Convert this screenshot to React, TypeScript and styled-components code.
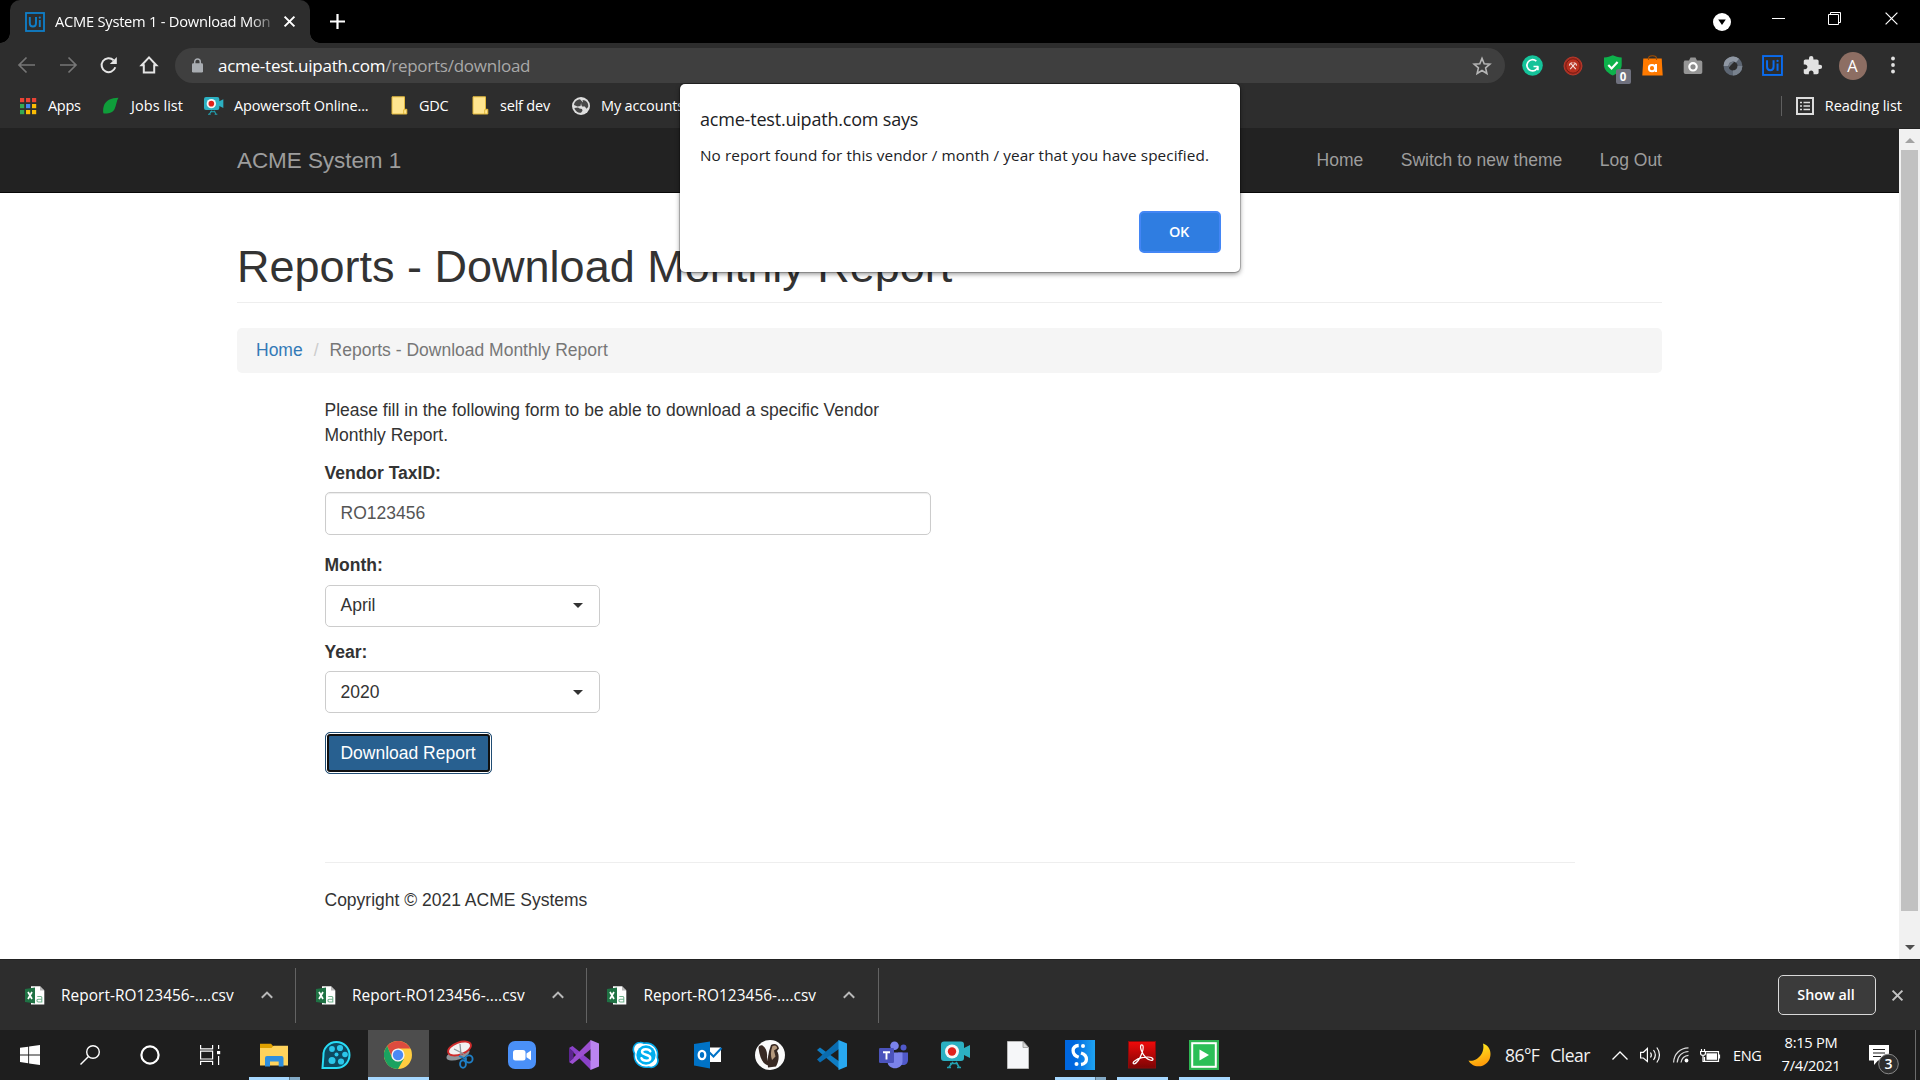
import React from "react";
import styled, { createGlobalStyle, css } from "styled-components";

const ui = `"Open Sans", "Noto Sans", sans-serif`;
const page = `"Liberation Sans", Arial, sans-serif`;

const Global = createGlobalStyle`
  *, *::before, *::after { box-sizing: border-box; }
  html, body { margin: 0; padding: 0; background: #fff; overflow: hidden; }
  button, input { font: inherit; margin: 0; }
  svg { display: block; flex: none; overflow: visible; }
`;

const Screen = styled.div`
  position: relative;
  width: 1920px;
  height: 1080px;
  display: flex;
  flex-direction: column;
  overflow: hidden;
  font-family: ${ui};
`;

/* ---------- tab strip ---------- */
const TabStrip = styled.header`
  height: 43px;
  flex: none;
  background: #000;
  display: flex;
  align-items: flex-start;
  padding-left: 10px;
`;
const Tab = styled.div`
  position: relative;
  width: 300px;
  height: 43px;
  background: #2d2d2d;
  border-radius: 10px 10px 0 0;
  display: flex;
  align-items: center;
  padding-left: 15px;
  &::before, &::after {
    content: "";
    position: absolute;
    bottom: 0;
    width: 10px;
    height: 10px;
  }
  &::before { left: -10px; background: radial-gradient(circle at 0 0, #000 9.5px, #2d2d2d 10px); }
  &::after { right: -10px; background: radial-gradient(circle at 100% 0, #000 9.5px, #2d2d2d 10px); }
`;
const TabTitle = styled.span`
  width: 221px;
  margin: 0 8px 2px 10px;
  white-space: nowrap;
  color: #fff;
  font-size: 14.7px;
  letter-spacing: -0.25px;
  line-height: 22px;
  mask-image: linear-gradient(to right, #000 88%, transparent 101%);
`;
const NewTab = styled.div`
  padding: 14px 0 0 20px;
`;
const WindowControls = styled.div`
  margin-left: auto;
  display: flex;
  height: 43px;
  width: 207.5px;
`;
const ControlSlot = styled.div<{ $w: number; $top: number }>`
  width: ${(p) => p.$w}px;
  padding-top: ${(p) => p.$top}px;
`;

/* ---------- address row ---------- */
const Toolbar = styled.div`
  height: 45px;
  flex: none;
  background: #2d2d2d;
  display: flex;
  align-items: center;
`;
const NavButtons = styled.nav`
  width: 175px;
  padding: 0 0 1px 17px;
  display: flex;
  gap: 21px;
`;
const Omnibox = styled.div`
  width: 1330px;
  height: 35px;
  border-radius: 18px;
  background: #3f3f3f;
  display: flex;
  align-items: center;
  padding: 0 13px 0 17px;
`;
const Url = styled.span`
  flex: 1;
  margin-left: 15px;
  font-size: 17px;
  letter-spacing: -0.25px;
  line-height: 24px;
  color: #a9a9a9;
  b { font-weight: 400; color: #fff; }
`;
const Extensions = styled.div`
  display: flex;
  align-items: center;
  margin-left: 7.5px;
`;
const ExtSlot = styled.div`
  position: relative;
  width: 40px;
  height: 40px;
  display: flex;
  align-items: center;
  justify-content: center;
`;
const Avatar = styled.div`
  width: 28px;
  height: 28px;
  border-radius: 50%;
  background: #8d6e63;
  color: #fff;
  font-size: 16.5px;
  line-height: 28px;
  text-align: center;
`;
const ExtBadge = styled.span`
  position: absolute;
  left: 23px;
  top: 23px;
  width: 15px;
  height: 15px;
  border-radius: 2px;
  background: #6f717e;
  color: #fff;
  font-size: 11.5px;
  font-weight: 700;
  line-height: 16px;
  text-align: center;
`;

/* ---------- bookmarks ---------- */
const Bookmarks = styled.div`
  height: 41px;
  flex: none;
  background: #2d2d2d;
  border-bottom: 1px solid #222;
  display: flex;
  align-items: center;
  padding: 0 18px 5px 19px;
  color: #fff;
  font-size: 14.5px;
`;
const Bookmark = styled.div<{ $w: number; $ls?: number; $gap?: number }>`
  width: ${(p) => p.$w}px;
  flex: none;
  display: flex;
  align-items: center;
  gap: ${(p) => p.$gap ?? 11}px;
  letter-spacing: ${(p) => p.$ls ?? -0.3}px;
  white-space: nowrap;
`;
const ReadingList = styled.div`
  margin-left: auto;
  height: 20px;
  border-left: 1px solid #5f5f5f;
  padding-left: 14px;
  display: flex;
  align-items: center;
  gap: 11px;
  letter-spacing: -0.03px;
  white-space: nowrap;
`;

/* ---------- page ---------- */
const Viewport = styled.div`
  height: 830px;
  flex: none;
  display: flex;
  font-family: ${page};
  font-size: 17.5px;
  line-height: 25px;
  color: #333;
`;
const PageBody = styled.div`
  width: 1899px;
  background: #fff;
`;
const Navbar = styled.div`
  height: 64px;
  background: #222;
  border-bottom: 1px solid #080808;
  padding: 0 237px;
  display: flex;
  align-items: center;
  color: #9d9d9d;
`;
const Brand = styled.span`
  font-size: 22.5px;
  letter-spacing: -0.07px;
  padding-bottom: 1px;
  flex: 1;
`;
const NavLinks = styled.div`
  display: flex;
  gap: 37.5px;
`;
const Main = styled.main`
  padding: 50px 237px 0;
`;
const Title = styled.h1`
  margin: 0;
  height: 60px;
  font-size: 45px;
  font-weight: 400;
  line-height: 47px;
  border-bottom: 1px solid #eee;
`;
const Breadcrumb = styled.div`
  margin-top: 25px;
  height: 45px;
  border-radius: 5px;
  background: #f5f5f5;
  padding: 10px 19px;
  display: flex;
  color: #777;
  a { color: #337ab7; }
  i { font-style: normal; color: #ccc; padding: 0 11px; }
`;
const Content = styled.div`
  margin: 25.25px 87.5px 0;
`;
const Intro = styled.p`
  width: 606px;
  margin: 0 0 12.5px;
`;
const Label = styled.label<{ $mt?: number }>`
  display: block;
  font-weight: 700;
  margin: ${(p) => p.$mt ?? 0}px 0 6.25px;
`;
const fieldBox = css`
  height: 42.5px;
  border: 1px solid #ccc;
  border-radius: 5px;
  background: #fff;
  display: flex;
  align-items: center;
`;
const Input = styled.input`
  ${fieldBox}
  width: 606px;
  display: block;
  padding: 0 15px;
  color: #555;
  outline: none;
  box-shadow: inset 0 1px 1px rgba(0, 0, 0, 0.075);
`;
const Select = styled.button`
  ${fieldBox}
  width: 275px;
  padding: 0 16px 0 15px;
  justify-content: space-between;
  color: #333;
`;
const Caret = styled.span`
  border: 5px solid transparent;
  border-top-color: #333;
  border-bottom: 0;
`;
const Submit = styled.button`
  display: block;
  margin-top: 18.75px;
  width: 167px;
  height: 42px;
  padding: 0;
  color: #fff;
  background: #286090;
  border: 1px solid #204d74;
  border-radius: 5px;
  box-shadow: inset 0 0 0 1px #fff, inset 0 0 0 3px #101010;
`;
const Rule = styled.hr`
  margin: 88px 0 25px;
  border: 0;
  border-top: 1px solid #eee;
`;
const Copyright = styled.p`
  margin: 0;
`;
const Scrollbar = styled.div`
  width: 21px;
  background: #f1f1f1;
  display: flex;
  flex-direction: column;
  align-items: center;
`;
const ScrollArrow = styled.span<{ $down?: boolean }>`
  margin: ${(p) => (p.$down ? "34px 0 0" : "9px 0 7px")};
  border: 5px solid transparent;
  ${(p) =>
    p.$down
      ? css`border-top-color: #505050; border-bottom-width: 0;`
      : css`border-bottom-color: #a3a3a3; border-top-width: 0;`}
`;
const Thumb = styled.div`
  width: 17px;
  height: 761px;
  background: #c1c1c1;
`;

/* ---------- alert ---------- */
const Dialog = styled.section`
  position: absolute;
  left: 680px;
  top: 84px;
  width: 560px;
  height: 188px;
  padding: 23px 19px 19px 20px;
  background: #fff;
  border-radius: 5px;
  box-shadow: 0 0 0 1px rgba(0, 0, 0, 0.2), 0 2px 5px rgba(0, 0, 0, 0.45);
  display: flex;
  flex-direction: column;
  color: #202124;
`;
const DialogTitle = styled.div`
  font-size: 18px;
  line-height: 24px;
  letter-spacing: -0.2px;
`;
const DialogText = styled.div`
  margin-top: 12px;
  font-size: 15.3px;
  line-height: 24px;
  letter-spacing: 0.08px;
  white-space: nowrap;
  flex: 1;
`;
const OkButton = styled.button`
  align-self: flex-end;
  width: 82px;
  height: 42px;
  padding: 0 2px 2px 0;
  border: 2px solid #4386f5;
  border-radius: 5px;
  background: #2f7de1;
  color: #fff;
  font-size: 14.5px;
  font-weight: 600;
  letter-spacing: -0.3px;
`;

/* ---------- downloads ---------- */
const DownloadBar = styled.div`
  height: 71px;
  flex: none;
  background: #2d2d2d;
  border-top: 1px solid #222;
  display: flex;
  align-items: center;
  color: #fff;
`;
const DownloadItem = styled.div<{ $first?: boolean }>`
  width: ${(p) => (p.$first ? 296 : 291.4)}px;
  height: 55px;
  padding: 0 22.5px 0 ${(p) => (p.$first ? 25 : 20)}px;
  border-right: 1px solid #636363;
  display: flex;
  align-items: center;
  font-size: 15.4px;
`;
const FileName = styled.span`
  margin-left: 16px;
  flex: 1;
  letter-spacing: 0.06px;
  white-space: nowrap;
`;
const ShowAll = styled.button`
  margin-left: auto;
  width: 98px;
  height: 40px;
  border: 1px solid #d8d8d8;
  border-radius: 5px;
  background: #3b3b3b;
  color: #fff;
  font-size: 14.3px;
  font-weight: 600;
  padding: 0 2px 2px 0;
`;
const CloseShelf = styled.div`
  width: 44px;
  padding-left: 16px;
`;

/* ---------- taskbar ---------- */
const Taskbar = styled.footer`
  height: 50px;
  flex: none;
  background: #1e1e1e;
  display: flex;
  color: #fff;
`;
const SystemButtons = styled.div`
  width: 243px;
  display: flex;
`;
const SystemButton = styled.div`
  width: 60px;
  display: flex;
  align-items: center;
  justify-content: center;
`;
const AppButton = styled.div<{ $state?: "open" | "stack" | "active" }>`
  position: relative;
  width: 62px;
  height: 50px;
  display: flex;
  align-items: center;
  justify-content: center;
  ${(p) =>
    p.$state === "active" &&
    css`background: linear-gradient(#4d4d4d, #4d4d4d) 1px 0 / 61px 100% no-repeat;`}
  ${(p) =>
    p.$state &&
    css`
      &::after {
        content: "";
        position: absolute;
        bottom: 0;
        left: ${p.$state === "active" ? 1 : 6}px;
        width: ${p.$state === "active" ? 61 : 51}px;
        height: 3px;
        background: ${p.$state === "stack"
          ? "linear-gradient(to right, #a6d8ff 40px, #5b7688 40px, #5b7688 41px, #83aac6 41px)"
          : "#a6d8ff"};
      }
    `}
`;
const Tray = styled.div`
  margin-left: auto;
  width: 452px;
  display: flex;
  align-items: center;
  white-space: nowrap;
`;
const TraySlot = styled.div<{ $w: number }>`
  width: ${(p) => p.$w}px;
  flex: none;
`;
const Weather = styled(TraySlot)`
  font-size: 17.5px;
  word-spacing: 7px;
  letter-spacing: -0.55px;
  padding-bottom: 1px;
  color: #f2f2f2;
`;
const Lang = styled(TraySlot)`
  font-size: 14.5px;
  letter-spacing: -0.3px;
`;
const Clock = styled(TraySlot)`
  font-size: 14.7px;
  line-height: 23px;
  letter-spacing: -0.3px;
  text-align: center;
  padding: 0 2px 2px 0;
`;
const Notifications = styled(TraySlot)`
  padding: 10px 0 0 22px;
`;
const DesktopEdge = styled.div`
  width: 1px;
  height: 50px;
  background: #6c6c6c;
`;

/* ---------- icons ---------- */
const UiPath = ({ color, size = 20 }: { color: string; size?: number }) => (
  <svg width={size} height={size} viewBox="0 0 20 20" fill="none" stroke={color}>
    <rect x="1" y="1" width="18" height="18" strokeWidth="1.8" />
    <path d="M4.8 5v6.200c0 4.400 6.200 4.400 6.200 0V5M14.800 8v7" strokeWidth="1.900" />
    <circle cx="14.800" cy="5.600" r="1.100" fill={color} stroke="none" />
  </svg>
);

const Cross = ({ size, w, color = "#fff" }: { size: number; w: number; color?: string }) => (
  <svg width={size} height={size} viewBox={`0 0 ${size} ${size}`} stroke={color} strokeWidth={w}>
    <path d={`M.6 .6L${size - 0.6} ${size - 0.6}M${size - 0.6} .6L.6 ${size - 0.6}`} />
  </svg>
);

const Arrow = ({ flip }: { flip?: boolean }) => (
  <svg width="20" height="20" viewBox="0 0 20 20" fill="none" stroke="#767676" strokeWidth="1.700">
    <path d={flip ? "M2 10h15.500M10.500 2.500L18 10l-7.500 7.500" : "M18 10H2.500M9.500 2.500L2 10l7.500 7.500"} />
  </svg>
);

const Reload = () => (
  <svg width="20" height="20" viewBox="0 0 20 20" fill="none" stroke="#e4e4e4" strokeWidth="2">
    <path d="M16.300 12.300A7 7 0 1 1 14.600 5.200" />
    <path d="M17.800 2v7h-7z" fill="#e4e4e4" stroke="none" />
  </svg>
);

const HomeIcon = () => (
  <svg width="18" height="20" viewBox="1 0 18 20" fill="none" stroke="#e4e4e4" strokeWidth="2">
    <path d="M2.600 10.300L10 2.400l7.400 7.900h-2.200v7.200H4.800v-7.200z" />
  </svg>
);

const Lock = () => (
  <svg width="11" height="15" viewBox="0 0 11 15">
    <path d="M2.700 6V3.800a2.800 2.800 0 0 1 5.600 0V6" fill="none" stroke="#a9adb2" strokeWidth="1.500" />
    <rect y="5.200" width="11" height="9.300" rx="1.200" fill="#a9adb2" />
  </svg>
);

const Star = () => (
  <svg width="20" height="20" viewBox="0 0 20 20" fill="none" stroke="#b5b5b5" strokeWidth="1.600">
    <path d="M10 2.400l2.200 5.300 5.700.5-4.300 3.700 1.300 5.600-4.900-3-4.900 3 1.300-5.600-4.300-3.700 5.700-.5z" />
  </svg>
);

const AppsGrid = () => {
  const c = ["#ea4335", "#ea4335", "#ea4335", "#34a853", "#4285f4", "#fbbc05", "#34a853", "#fbbc05", "#fbbc05"];
  return (
    <svg width="18" height="18" viewBox="0 0 18 18">
      {c.map((f, i) => (
        <rect key={i} x={1 + (i % 3) * 6} y={1 + Math.floor(i / 3) * 6} width="4.200" height="4.200" fill={f} />
      ))}
    </svg>
  );
};

const Leaf = () => (
  <svg width="17" height="17" viewBox="0 0 17 17">
    <path d="M16.500.8C9 1 3.500 3.500 1.800 9 .8 12.500 1 15.500 1.600 16.500c4.400.5 8.900-.5 11-4.500C14.500 8.300 14.300 4 16.500.8z" fill="#0f9d3a" />
  </svg>
);

const Recorder = ({ size }: { size: number }) => (
  <svg width={size} height={size} viewBox="0 0 30 30">
    <path d="M12 22l-4 5M9 23.500h8M15 22l3 5M6 27.500h4M16 27.500h4" stroke="#23a0b0" strokeWidth="1.600" fill="none" />
    <path d="M3 1.500h17a3 3 0 0 1 3 3v3.500l6-3v13l-6-3v3a3 3 0 0 1-3 3H3a3 3 0 0 1-3-3V4.500a3 3 0 0 1 3-3z" fill="#2cb0c2" />
    <circle cx="11" cy="11.500" r="7" fill="#f7f7f7" />
    <circle cx="11" cy="11.500" r="4.200" fill="#e0221c" />
  </svg>
);

const Folder = () => (
  <svg width="17" height="19" viewBox="0 0 17 19">
    <path d="M1 .8h12.500v12.500h2.300V18H1z" fill="#ffe58f" stroke="#e3b93d" strokeWidth="1" />
    <path d="M12.700 18v-4.300h3" fill="none" stroke="#e3b93d" />
  </svg>
);

const Globe = () => (
  <svg width="18" height="18" viewBox="0 0 18 18">
    <circle cx="9" cy="9" r="9" fill="#dedede" />
    <path d="M8 2.200c-3.500.3-5.800 3-6 5.800l3.500 1.500 3-.6.4-2 2.600-1zM10.500 3l.6 2.500-2 2 1 2h2.800l1.500 2.200 1.800-1.700c.6-4-2-6.800-5.700-7zM6 10.500l1.500 1 2.500.5.5 1.800-1.500 2C5 15.800 3 13.500 2.400 11z" fill="#2d2d2d" opacity=".85" />
  </svg>
);

const ListIcon = () => (
  <svg width="18" height="18" viewBox="0 0 18 18" fill="none" stroke="#dcdcdc">
    <rect x="1" y="1" width="16" height="16" strokeWidth="2" />
    <path d="M7.500 5.500H14M7.500 9H14M7.500 12.500H14" strokeWidth="1.500" />
    <path d="M4 5.500h2M4 9h2M4 12.500h2" strokeWidth="1.700" />
  </svg>
);

const Grammarly = () => (
  <svg width="21" height="21" viewBox="0 0 21 21">
    <circle cx="10.500" cy="10.500" r="10.300" fill="#15c39a" />
    <path d="M14.300 6.200A5.600 5.600 0 1 0 16 11.400M11.500 11.500h4.800M15.900 11.200v4" fill="none" stroke="#fff" strokeWidth="1.700" />
  </svg>
);

const RedExt = () => (
  <svg width="20" height="20" viewBox="0 0 20 20" fill="none">
    <circle cx="10" cy="10" r="9" fill="#a82c20" stroke="#b8392b" strokeWidth="1" />
    <circle cx="10" cy="10" r="7.200" fill="#b9301f" stroke="#6d1a13" strokeWidth=".9" />
    <path d="M7.200 13.200l4.600-5.400M12.800 13.200L8.200 7.800M6.400 9.600c.3-1.800 1.400-2.800 3.100-2.800M13.600 9.600c-.3-1.800-1.400-2.800-3.100-2.800" stroke="#f3dcd8" strokeWidth="1.100" />
  </svg>
);

const Shield = () => (
  <svg width="20" height="21" viewBox="0 0 20 21">
    <path d="M1 2.500C5 2.500 7 1.500 9.800.3 12.500 1.500 15 2.500 18.700 2.500V10c0 5-4.700 8.600-8.900 10.500C5.500 18.500 1 15 1 10z" fill="#0db14b" />
    <path d="M5.300 10l3.300 3.500 6-6.500" fill="none" stroke="#fff" strokeWidth="2.200" />
  </svg>
);

const Bag = () => (
  <svg width="21" height="21" viewBox="0 0 21 21" fill="none">
    <path d="M1.300 3.500h18.400l1 17H.300z" fill="#ff7a00" />
    <path d="M6.500 5V3.500c0-3.600 8-3.600 8 0V5" stroke="#a64e00" strokeWidth="1.100" />
    <circle cx="10" cy="13.200" r="3.100" stroke="#fff" strokeWidth="2" />
    <path d="M14 9v8" stroke="#fff" strokeWidth="2" />
  </svg>
);

const Camera = () => (
  <svg width="20" height="18" viewBox="0 0 20 18">
    <path d="M1.500 3.500h4.500L7.500.5h5L14 3.500h3.500A1.800 1.800 0 0 1 19.300 5.300v10a1.800 1.800 0 0 1-1.800 1.800h-15A1.800 1.800 0 0 1 .700 15.300v-10z" fill="#959595" />
    <circle cx="10" cy="9.800" r="3.700" fill="#8b8b8b" stroke="#fff" strokeWidth="2.200" />
  </svg>
);

const Swirl = () => (
  <svg width="20" height="20" viewBox="0 0 20 20" fill="none">
    <circle cx="10" cy="10" r="7" stroke="#5d6673" strokeWidth="4.800" />
    <path d="M3 10a7 7 0 0 1 11.500-5.300" stroke="#8f97a3" strokeWidth="4.800" />
    <path d="M10 17a7 7 0 0 0 7-7" stroke="#79828e" strokeWidth="4.800" />
    <path d="M5 12.500L6.500 6.500l5-1-4 4z" fill="#6c7580" />
  </svg>
);

const Puzzle = () => (
  <svg width="21" height="21" viewBox="0 0 24 24" fill="#e2e2e2">
    <path d="M20.500 11H19V7c0-1.100-.9-2-2-2h-4V3.500a2.500 2.500 0 0 0-5 0V5H4c-1.100 0-1.990.9-1.990 2v3.800H3.500c1.490 0 2.700 1.210 2.700 2.700s-1.210 2.700-2.700 2.700H2V20c0 1.100.9 2 2 2h3.800v-1.500c0-1.490 1.210-2.700 2.700-2.700s2.700 1.210 2.700 2.700V22H17c1.100 0 2-.9 2-2v-4h1.500a2.500 2.500 0 0 0 0-5z" />
  </svg>
);

const Dots = () => (
  <svg width="4" height="17" viewBox="0 0 4 17" fill="#e2e2e2">
    <circle cx="2" cy="1.500" r="1.900" />
    <circle cx="2" cy="8" r="1.900" />
    <circle cx="2" cy="14.500" r="1.900" />
  </svg>
);

const CsvFile = () => (
  <svg width="20" height="19" viewBox="0 0 20 19">
    <path d="M6 .3h9l4.300 4.300v14H6z" fill="#fff" />
    <path d="M15 .3v4.300h4.300z" fill="#b8b8b8" />
    <path d="M0 3l10-1.500v16L0 16z" fill="#1f7244" />
    <path d="M3 6l4 7M7 6l-4 7" stroke="#fff" strokeWidth="1.700" />
    <path d="M12.300 10.500h3.500a1 1 0 0 1 1 1V16h-3.500a1.400 1.400 0 0 1 0-2.800h3.500" fill="none" stroke="#6fb38d" strokeWidth="1.100" />
  </svg>
);

const Chevron = () => (
  <svg width="12" height="8" viewBox="0 0 12 8" fill="none" stroke="#b9b9b9" strokeWidth="2">
    <path d="M.8 6.800L6 1.600l5.200 5.200" />
  </svg>
);

const Explorer = () => (
  <svg width="28" height="24" viewBox="0 0 28 24">
    <path d="M0 .8h11l2.500 2.700V9H0z" fill="#e0a100" />
    <path d="M0 5h11.500l2-2.200H28V22.500H0z" fill="#ffd35c" />
    <path d="M5 23.500V15a2 2 0 0 1 2-2h14.500a2 2 0 0 1 2 2v8.500h-4.800V18.500H10v5z" fill="#2f8fde" />
  </svg>
);

const Reel = () => (
  <svg width="30" height="28" viewBox="0 0 30 28">
    <path d="M15.500 1A13 13 0 1 1 15.500 27H1.500l.9-12A13 13 0 0 1 15.500 1z" fill="#0d4a60" stroke="#28dcf5" strokeWidth="2" />
    <g fill="#2bc7ea">
      <circle cx="11" cy="8" r="2.900" />
      <circle cx="19" cy="7" r="3.100" />
      <circle cx="24" cy="13.500" r="2.800" />
      <circle cx="20" cy="20.500" r="3.100" />
      <circle cx="11" cy="19.500" r="3.500" />
      <circle cx="15.500" cy="13.500" r="2" />
    </g>
  </svg>
);

const Chrome = () => (
  <svg width="28" height="28" viewBox="0 0 28 28">
    <circle cx="14" cy="14" r="14" fill="#ffcd40" />
    <path d="M14 7.500h12.400A14 14 0 0 0 3.200 5.100l5.200 12.200z" fill="#dd4b3e" />
    <path d="M3.200 5.100A14 14 0 0 0 14 28l6-10.500-6 3-5.800-3.300z" fill="#1aa260" />
    <circle cx="14" cy="14" r="6.600" fill="#f4f4f4" />
    <circle cx="14" cy="14" r="5.200" fill="#4a89f3" />
  </svg>
);

const Snip = () => (
  <svg width="28" height="28" viewBox="0 0 28 28" fill="none">
    <ellipse cx="12" cy="13.500" rx="12" ry="5" fill="#8e9499" transform="rotate(-18 12 13.500)" />
    <ellipse cx="13.500" cy="7.500" rx="12" ry="6" fill="#f1f1f1" stroke="#cf2b2b" strokeWidth="1.800" transform="rotate(-20 13.500 7.500)" />
    <path d="M14 3l1 11M8 8l10 5" stroke="#8e9499" strokeWidth="1.300" />
    <circle cx="23" cy="18" r="3.600" stroke="#1f7fc6" strokeWidth="1.900" />
    <ellipse cx="17" cy="23" rx="2.900" ry="3.800" stroke="#1f7fc6" strokeWidth="1.900" />
    <path d="M13 15l7 3-1 3" stroke="#1f7fc6" strokeWidth="1.900" />
  </svg>
);

const Zoom = () => (
  <svg width="28" height="28" viewBox="0 0 28 28">
    <rect width="28" height="28" rx="7" fill="#4a90f8" />
    <rect x="5" y="9" width="12.500" height="10.500" rx="2.500" fill="#fff" />
    <path d="M18.500 12.500L23 9.500v9.800l-4.500-3z" fill="#fff" />
  </svg>
);

const VisualStudio = () => (
  <svg width="30" height="30" viewBox="0 0 30 30">
    <path d="M0 8l3.500-2 18.500 15V30z" fill="#8a42c8" />
    <path d="M0 22L22 0v9L3.500 24z" fill="#9b4fd0" />
    <path d="M0 8l4.500 3.500v7L0 22z" fill="#5c2490" />
    <path d="M21.500 0L30 3.500v23L21.500 30z" fill="#bb85f0" />
  </svg>
);

const Skype = () => (
  <svg width="28" height="28" viewBox="0 0 28 28" fill="none">
    <path d="M8 1.500a7 7 0 0 1 4 .8C21 1 27 8 25.300 16.500 27.500 22 23 28 16.500 26 8 27.500 1 21 2.500 12.500-.5 7 3 1.500 8 1.500z" fill="#fff" stroke="#00a6e8" strokeWidth="1.600" />
    <circle cx="14" cy="14" r="9.700" fill="#00aff0" />
    <path d="M18.300 10.300C17 7.500 10 7.300 10 10.800c0 3.700 8.300 2.200 8.300 6.200 0 3.700-7.500 3.500-8.800.2" stroke="#fff" strokeWidth="2.400" strokeLinecap="round" />
  </svg>
);

const Outlook = () => (
  <svg width="28" height="28" viewBox="0 0 28 28" fill="none">
    <rect x="14" y="6.500" width="13" height="14.500" fill="#fff" />
    <path d="M14.500 10.500l5 5 8-8.500" stroke="#0072c6" strokeWidth="2" />
    <path d="M0 3l16-2.500v27L0 24.500z" fill="#0072c6" />
    <ellipse cx="8" cy="14" rx="3.300" ry="4.200" stroke="#fff" strokeWidth="2.300" />
  </svg>
);

const Beaver = () => (
  <svg width="30" height="30" viewBox="0 0 30 30">
    <circle cx="15" cy="15" r="15" fill="#fbfbfb" />
    <path d="M3.500 8c0-2 2-3 4-2.500C11 8 12.500 12 12 17l2 8.500C8.500 25 5 19 3.500 8z" fill="#382923" />
    <path d="M16 5c3.500-2.500 7.500-.5 8 3.500l-2 2.500c3 4.500 1.500 11.500-1 15.500l-8 1c-1-7 0-14 3-22.500z" fill="#382923" />
    <path d="M17.500 6c3-1.500 5 .5 4.500 2.500l-3 2 1.500 6-3.500 3.500c-1.500-4-1.500-9 .5-14z" fill="#b5997d" />
  </svg>
);

const VsCode = () => (
  <svg width="30" height="30" viewBox="0 0 30 30">
    <path d="M0 10l3-2.500L23 22v7.500z" fill="#0f7dc4" />
    <path d="M0 19.500L22 0v9L3 22.500z" fill="#0a6cb0" />
    <path d="M21.500 0L30 3.500v23L21.500 30z" fill="#28a8f0" />
  </svg>
);

const Teams = () => (
  <svg width="30" height="28" viewBox="0 0 30 28" fill="none">
    <circle cx="24.500" cy="6.500" r="3" fill="#5059c9" />
    <path d="M19 11.500h10v7.500c0 3-2 5-5 5h-3z" fill="#5059c9" />
    <circle cx="15.500" cy="4.800" r="4.300" fill="#7b83eb" />
    <path d="M8.500 11.500h15v9c0 9-15 9-15 0z" fill="#7b83eb" />
    <rect x="0" y="7" width="15" height="15" rx="1.200" fill="#4b53bc" />
    <path d="M4 11.200h7M7.500 11v7.500" stroke="#fff" strokeWidth="1.900" />
  </svg>
);

const BlankFile = () => (
  <svg width="22" height="28" viewBox="0 0 22 28">
    <path d="M.5.500H16l5.500 6V27.500H.5z" fill="#f6f7f9" stroke="#b9b9b9" />
    <path d="M16 .5v6h5.500z" fill="#d9d9d9" stroke="#9a9a9a" strokeWidth=".8" />
  </svg>
);

const Studio = () => (
  <svg width="30" height="30" viewBox="0 0 30 30" fill="none">
    <defs>
      <linearGradient id="studio" x1="0" y1="0" x2="1" y2="0">
        <stop offset=".3" stopColor="#0067df" /><stop offset="1" stopColor="#1fa4f2" />
      </linearGradient>
    </defs>
    <rect width="30" height="30" fill="url(#studio)" />
    <path d="M13.700 5.500C6.500 6 6 14.500 13.700 17.300M16 13C23.500 15.500 23 23.500 16 24.500" stroke="#fff" strokeWidth="3.300" />
    <circle cx="18" cy="6" r="2" fill="#fff" />
    <circle cx="11.500" cy="24" r="2" fill="#fff" />
  </svg>
);

const Acrobat = () => (
  <svg width="28" height="28" viewBox="0 0 28 28" fill="none">
    <defs>
      <linearGradient id="acro" x1="0" y1="0" x2="0" y2="1">
        <stop offset="0" stopColor="#f00a0a" /><stop offset="1" stopColor="#7c0505" />
      </linearGradient>
    </defs>
    <rect x=".5" y=".5" width="27" height="26.500" fill="url(#acro)" stroke="#8b0a0a" />
    <path d="M13 4c3-1 2.500 4 1 8-2 5.500-5.500 10.500-8 11-3-1 2-5 8-6.300 5-1 10-1 11 1.300.3 2.300-4 1.500-7-1.300-4-4-6.500-10.500-5-12.700z" stroke="#fff" strokeWidth="1.200" />
  </svg>
);

const Robot = () => (
  <svg width="30" height="30" viewBox="0 0 30 30">
    <rect width="30" height="30" fill="#2db552" />
    <rect x="3.200" y="3.200" width="23.600" height="23.600" fill="#2bbf57" stroke="#fff" strokeWidth="2" />
    <path d="M10.500 9.500l9.500 5.500-9.500 5.500z" fill="#fff" />
  </svg>
);

const Moon = () => (
  <svg width="24" height="24" viewBox="0 0 24 24">
    <defs>
      <linearGradient id="moon" x1="0" y1="0" x2=".3" y2="1">
        <stop offset=".2" stopColor="#ffe51f" /><stop offset="1" stopColor="#ff9d0a" />
      </linearGradient>
    </defs>
    <path d="M15 .5c4.500 1.500 7.500 5 7.500 10.500A12 12 0 0 1 10.500 23.300C6 23.300 2.300 21 .5 17.500 8 19.500 17.500 11 15 .5z" fill="url(#moon)" />
  </svg>
);

const TASKS: { icon: React.ReactNode; state?: "open" | "stack" | "active" }[] = [
  { icon: <Explorer />, state: "stack" },
  { icon: <Reel /> },
  { icon: <Chrome />, state: "active" },
  { icon: <Snip /> },
  { icon: <Zoom /> },
  { icon: <VisualStudio /> },
  { icon: <Skype /> },
  { icon: <Outlook /> },
  { icon: <Beaver /> },
  { icon: <VsCode /> },
  { icon: <Teams /> },
  { icon: <Recorder size={30} /> },
  { icon: <BlankFile /> },
  { icon: <Studio />, state: "stack" },
  { icon: <Acrobat />, state: "open" },
  { icon: <Robot />, state: "open" },
];

export default function App() {
  return (
    <Screen>
      <Global />
      <TabStrip>
        <Tab>
          <UiPath color="#0f7fc9" />
          <TabTitle>ACME System 1 - Download Mon</TabTitle>
          <Cross size={11} w={2} />
        </Tab>
        <NewTab>
          <svg width="15" height="15" viewBox="0 0 15 15" stroke="#fff" strokeWidth="2.200">
            <path d="M7.500 0v15M0 7.500h15" />
          </svg>
        </NewTab>
        <WindowControls>
          <ControlSlot $w={59} $top={13}>
            <svg width="18" height="18" viewBox="0 0 18 18">
              <circle cx="9" cy="9" r="9" fill="#fff" />
              <path d="M5.200 6.500h7.600L9 12z" fill="#000" />
            </svg>
          </ControlSlot>
          <ControlSlot $w={56} $top={18}>
            <svg width="13" height="1"><rect width="13" height="1" fill="#fff" /></svg>
          </ControlSlot>
          <ControlSlot $w={57.5} $top={12}>
            <svg width="13" height="13" viewBox="0 0 13 13" fill="none" stroke="#fff">
              <path d="M.5 2.500h10v10H.5zM2.500 2.500v-2h10v10h-2" />
            </svg>
          </ControlSlot>
          <ControlSlot $w={30} $top={12}>
            <Cross size={13} w={1.2} />
          </ControlSlot>
        </WindowControls>
      </TabStrip>

      <Toolbar>
        <NavButtons>
          <Arrow />
          <Arrow flip />
          <Reload />
          <HomeIcon />
        </NavButtons>
        <Omnibox>
          <Lock />
          <Url><b>acme-test.uipath.com</b>/reports/download</Url>
          <Star />
        </Omnibox>
        <Extensions>
          <ExtSlot><Grammarly /></ExtSlot>
          <ExtSlot><RedExt /></ExtSlot>
          <ExtSlot><Shield /><ExtBadge>0</ExtBadge></ExtSlot>
          <ExtSlot><Bag /></ExtSlot>
          <ExtSlot><Camera /></ExtSlot>
          <ExtSlot><Swirl /></ExtSlot>
          <ExtSlot><UiPath color="#0a6cf0" size={21} /></ExtSlot>
          <ExtSlot><Puzzle /></ExtSlot>
          <ExtSlot><Avatar>A</Avatar></ExtSlot>
          <ExtSlot><Dots /></ExtSlot>
        </Extensions>
      </Toolbar>

      <Bookmarks>
        <Bookmark $w={83}><AppsGrid />Apps</Bookmark>
        <Bookmark $w={102} $gap={12} $ls={0.05}><Leaf />Jobs list</Bookmark>
        <Bookmark $w={187} $gap={10} $ls={-0.15}><Recorder size={20} />Apowersoft Online...</Bookmark>
        <Bookmark $w={81}><Folder />GDC</Bookmark>
        <Bookmark $w={100} $ls={-0.2}><Folder />self dev</Bookmark>
        <Bookmark $w={130} $gap={11} $ls={-0.15}><Globe />My accounts</Bookmark>
        <ReadingList><ListIcon />Reading list</ReadingList>
      </Bookmarks>

      <Viewport>
        <PageBody>
          <Navbar>
            <Brand>ACME System 1</Brand>
            <NavLinks>
              <span>Home</span>
              <span>Switch to new theme</span>
              <span>Log Out</span>
            </NavLinks>
          </Navbar>
          <Main>
            <Title>Reports - Download Monthly Report</Title>
            <Breadcrumb>
              <a>Home</a><i>/</i><span>Reports - Download Monthly Report</span>
            </Breadcrumb>
            <Content>
              <Intro>
                Please fill in the following form to be able to download a specific Vendor
                Monthly Report.
              </Intro>
              <Label>Vendor TaxID:</Label>
              <Input defaultValue="RO123456" />
              <Label $mt={18.75}>Month:</Label>
              <Select>April<Caret /></Select>
              <Label $mt={12.5}>Year:</Label>
              <Select>2020<Caret /></Select>
              <Submit>Download Report</Submit>
              <Rule />
              <Copyright>Copyright © 2021 ACME Systems</Copyright>
            </Content>
          </Main>
        </PageBody>
        <Scrollbar>
          <ScrollArrow />
          <Thumb />
          <ScrollArrow $down />
        </Scrollbar>
      </Viewport>

      <DownloadBar>
        {[0, 1, 2].map((i) => (
          <DownloadItem key={i} $first={i === 0}>
            <CsvFile />
            <FileName>Report-RO123456-....csv</FileName>
            <Chevron />
          </DownloadItem>
        ))}
        <ShowAll>Show all</ShowAll>
        <CloseShelf><Cross size={11} w={2} color="#c4c4c4" /></CloseShelf>
      </DownloadBar>

      <Taskbar>
        <SystemButtons>
          <SystemButton>
            <svg width="20" height="20" viewBox="0 0 20 20" fill="#fff">
              <path d="M0 2.800l8.200-1.100v7.700H0zM9.100 1.500L20 0v9.400H9.100zM0 10.400h8.200v7.800L0 17zM9.100 10.400H20V20L9.100 18.400z" />
            </svg>
          </SystemButton>
          <SystemButton>
            <svg width="20" height="20" viewBox="0 0 20 20" fill="none" stroke="#fff" strokeWidth="1.400">
              <circle cx="13" cy="7" r="6.300" />
              <path d="M8.500 11.500L.5 19.500" />
            </svg>
          </SystemButton>
          <SystemButton>
            <svg width="20" height="20" viewBox="0 0 20 20" fill="none" stroke="#fff" strokeWidth="2.200">
              <circle cx="10" cy="10" r="8.600" />
            </svg>
          </SystemButton>
          <SystemButton>
            <svg width="21" height="20" viewBox="0 0 21 20" fill="none" stroke="#fff" strokeWidth="1.200">
              <path d="M.6 0v3.800h12V0M.6 6.200h12v7.800H.6zM.6 20v-3.600h12V20M18.600 0v4M18.600 11v9" />
              <rect x="17" y="6" width="3.200" height="3.200" fill="#fff" stroke="none" />
            </svg>
          </SystemButton>
        </SystemButtons>
        {TASKS.map((t, i) => (
          <AppButton key={i} $state={t.state}>{t.icon}</AppButton>
        ))}
        <Tray>
          <TraySlot $w={37}><Moon /></TraySlot>
          <Weather $w={107}>86°F Clear</Weather>
          <TraySlot $w={28}>
            <svg width="16" height="9" viewBox="0 0 16 9" fill="none" stroke="#fff" strokeWidth="1.300">
              <path d="M.5 8.500L8 1l7.500 7.500" />
            </svg>
          </TraySlot>
          <TraySlot $w={33}>
            <svg width="21" height="18" viewBox="0 0 21 18" fill="none" stroke="#fff" strokeWidth="1.200">
              <path d="M.6 6.300h2.800L7.400 2.500v13L3.400 12H.6z" />
              <path d="M10.500 6.500c1 1.500 1 3.500 0 5M13.500 4c2.200 3 2.200 7 0 10M16.800 1.500c3.500 4.500 3.500 10.500 0 15" />
            </svg>
          </TraySlot>
          <TraySlot $w={27}>
            <svg width="16" height="16" viewBox="0 0 16 16" fill="none" stroke="#ddd" strokeWidth="1.200">
              <path d="M.6 15.500C1 7 7 1 15.500.8M4.200 15.500C4.600 9 9 4.700 15.500 4.500M8 15.500c.4-4 3.500-7 7.500-7.200" />
              <circle cx="13.500" cy="13.500" r="1.900" fill="#fff" stroke="none" />
            </svg>
          </TraySlot>
          <TraySlot $w={33}>
            <svg width="20" height="13" viewBox="0 0 20 13" fill="none" stroke="#fff" strokeWidth="1.200">
              <path d="M5.500 2.600h13v9.800h-14V8M1.500 0v2.500M4.500 0v2.500M.6 2.500h4.800v2c0 2.400-4.800 2.400-4.800 0zM3 6v6.500h1.500M19.500 5.500v4" />
              <rect x="6.500" y="4.300" width="10.500" height="6.500" fill="#fff" stroke="none" />
            </svg>
          </TraySlot>
          <Lang $w={44}>ENG</Lang>
          <Clock $w={70}>8:15 PM<br />7/4/2021</Clock>
          <Notifications $w={67.5}>
            <svg width="31" height="30" viewBox="0 0 31 30">
              <path d="M0 0h20v15.500H9L5 20v-4.500H0z" fill="#fff" />
              <path d="M4 4.500h12M4 8h12M4 11.500h8" stroke="#1e1e1e" strokeWidth="1.200" />
              <circle cx="19.500" cy="19" r="9.800" fill="#2e2e2e" stroke="#888" />
              <text x="19.500" y="24" textAnchor="middle" fontFamily="Open Sans" fontSize="14" fontWeight="600" fill="#fff">3</text>
            </svg>
          </Notifications>
          <DesktopEdge />
        </Tray>
      </Taskbar>

      <Dialog>
        <DialogTitle>acme-test.uipath.com says</DialogTitle>
        <DialogText>No report found for this vendor / month / year that you have specified.</DialogText>
        <OkButton>OK</OkButton>
      </Dialog>
    </Screen>
  );
}
